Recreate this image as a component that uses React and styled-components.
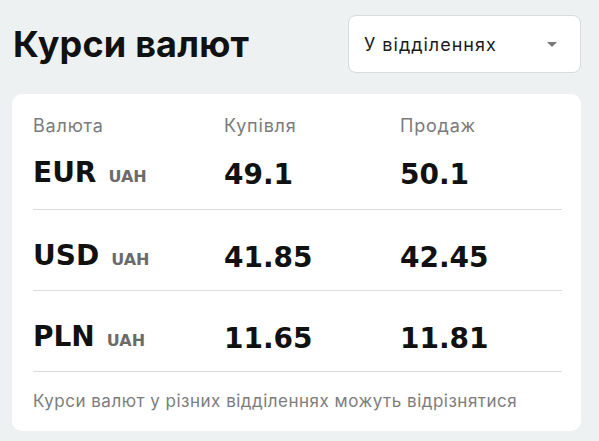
import styled, { createGlobalStyle } from 'styled-components';

const GlobalStyle = createGlobalStyle`
  body {
    margin: 0;
    background: #eef1f2;
    font-family: Inter, 'Noto Sans', sans-serif;
    color: #111;
  }
`;

const rates = [
  { code: 'EUR', buy: '49.1', sell: '50.1' },
  { code: 'USD', buy: '41.85', sell: '42.45' },
  { code: 'PLN', buy: '11.65', sell: '11.81' },
];

const App = () => {
  return (
    <>
      <GlobalStyle />
      <Page>
        <Top>
          <Title>Курси валют</Title>
          <Select>
            <span>У відділеннях</span>
            <Caret />
          </Select>
        </Top>
        <Card>
          <HeadRow>
            <span>Валюта</span>
            <span>Купівля</span>
            <span>Продаж</span>
          </HeadRow>
          {rates.map((rate, i) => (
            <Row key={rate.code} $first={i === 0}>
              <Code>
                {rate.code}
                <Base>UAH</Base>
              </Code>
              <Value>{rate.buy}</Value>
              <Value>{rate.sell}</Value>
            </Row>
          ))}
          <Note>Курси валют у різних відділеннях можуть відрізнятися</Note>
        </Card>
      </Page>
    </>
  );
};

const Page = styled.div`
  width: 599px;
  height: 441px;
  padding: 15px 18px 0 12px;
  box-sizing: border-box;
`;

const Top = styled.div`
  display: flex;
  align-items: center;
  justify-content: space-between;
`;

const Title = styled.h1`
  margin: 0 0 0 1px;
  font-size: 36px;
  font-weight: 700;
  letter-spacing: 0.2px;
  line-height: 1;
`;

const Select = styled.div`
  width: 233px;
  height: 58px;
  box-sizing: border-box;
  display: flex;
  align-items: center;
  justify-content: space-between;
  padding: 0 23px 0 15px;
  background: #fff;
  border: 1px solid #d6dbde;
  border-radius: 8px;
  font-size: 18px;
  letter-spacing: 1px;
  color: #1a1a1a;
`;

const Caret = styled.span`
  width: 0;
  height: 0;
  border-left: 5px solid transparent;
  border-right: 5px solid transparent;
  border-top: 5px solid #777;
`;

const Card = styled.div`
  margin-top: 21px;
  background: #fff;
  border-radius: 10px;
  padding: 20px 19px 0 21px;
  height: 337px;
  box-sizing: border-box;
`;

const Grid = styled.div`
  display: grid;
  grid-template-columns: 191px 176px 1fr;
  align-items: center;
`;

const HeadRow = styled(Grid)`
  font-size: 18px;
  letter-spacing: 0.8px;
  line-height: 24px;
  color: #7b7b7b;
`;

const Row = styled(Grid)`
  height: 32px;
  padding: ${(p) => (p.$first ? '19px 0 20px' : '30px 0 18px')};
  border-bottom: 1px solid #dcdcdc;
  font-family: 'DejaVu Sans', sans-serif;
  font-weight: 700;
  line-height: 32px;
`;

const Code = styled.div`
  display: flex;
  align-items: baseline;
  font-size: 28px;
`;

const Base = styled.span`
  margin-left: 12px;
  font-size: 16px;
  color: #6b6b6b;
`;

const Value = styled.div`
  font-size: 28px;
`;

const Note = styled.p`
  margin: 0;
  padding: 18px 0 0;
  font-size: 17px;
  letter-spacing: 0.5px;
  line-height: 22px;
  color: #7d7d7d;
`;

export default App;
